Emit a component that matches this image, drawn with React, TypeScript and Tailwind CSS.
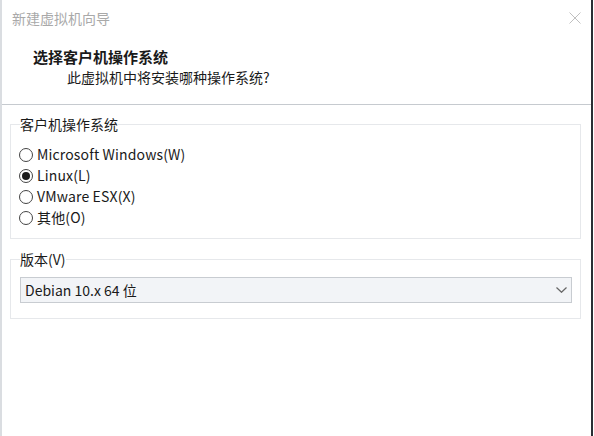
import React from 'react';

const osOptions = [
  { label: 'Microsoft Windows(W)', value: 'windows' },
  { label: 'Linux(L)', value: 'linux' },
  { label: 'VMware ESX(X)', value: 'esx' },
  { label: '其他(O)', value: 'other' },
];

const Radio: React.FC<{ checked: boolean; label: string; onSelect: () => void }> = ({
  checked,
  label,
  onSelect,
}) => (
  <label className="flex items-center h-[21px] cursor-default" onClick={onSelect}>
    <span className="w-[14px] h-[14px] rounded-full border border-[#444] flex items-center justify-center shrink-0">
      {checked && <span className="w-[8px] h-[8px] rounded-full bg-[#1a1a1a]" />}
    </span>
    <span className="ml-[4px] tracking-[0.15px]">{label}</span>
  </label>
);

const App: React.FC = () => {
  const [os, setOs] = React.useState('linux');

  return (
    <div className="w-[594px] h-[436px] bg-white flex font-['Noto_Sans_CJK_SC','Noto_Sans',sans-serif] text-[14px] text-[#1a1a1a] overflow-hidden">
      <div className="flex-1 flex flex-col border-l-2 border-[#dadde1]">
        {/* header */}
        <div className="h-[105px] border-b border-[#c6cacf] shrink-0">
          <div className="flex items-center justify-between pt-[8px] pl-[10px] pr-[10px] h-[28px]">
            <span className="text-[14px] leading-[20px] text-[#a9a9a9]">新建虚拟机向导</span>
            <svg width="12" height="12" viewBox="0 0 12 12" className="text-[#c0c0c0]">
              <path d="M0.5 0.5 L11.5 11.5 M11.5 0.5 L0.5 11.5" stroke="currentColor" strokeWidth="1" />
            </svg>
          </div>
          <div className="mt-[19px] pl-[31px] text-[15px] font-bold leading-[20px]">选择客户机操作系统</div>
          <div className="pl-[65px] leading-[20px]">此虚拟机中将安装哪种操作系统?</div>
        </div>

        {/* body */}
        <div className="pt-[10px] pl-[8px] pr-[10px]">
          <fieldset className="border border-[#e6e8eb] pl-[8px] pr-[9px] pt-[11px] pb-[10px]">
            <legend className="leading-[18px] ml-[1px]">客户机操作系统</legend>
            {osOptions.map((o) => (
              <Radio key={o.value} label={o.label} checked={os === o.value} onSelect={() => setOs(o.value)} />
            ))}
          </fieldset>

          <fieldset className="mt-[11px] border border-[#e6e8eb] pl-[9px] pr-[8px] pt-[9px] pb-[15px]">
            <legend className="leading-[18px]">版本(V)</legend>
            <div className="h-[26px] border border-[#c8ccd1] bg-[#f2f4f7] flex items-center justify-between pl-[4px] pr-[4px]">
              <span>Debian 10.x 64 位</span>
              <svg width="11" height="6" viewBox="0 0 11 6" className="text-[#666]">
                <path d="M0.5 0.5 L5.5 5.3 L10.5 0.5" fill="none" stroke="currentColor" strokeWidth="1.2" />
              </svg>
            </div>
          </fieldset>
        </div>
      </div>
      <div className="w-[2px] bg-[#2a2e34] shrink-0" />
      <div className="w-[1px] bg-white shrink-0" />
    </div>
  );
};

export default App;
